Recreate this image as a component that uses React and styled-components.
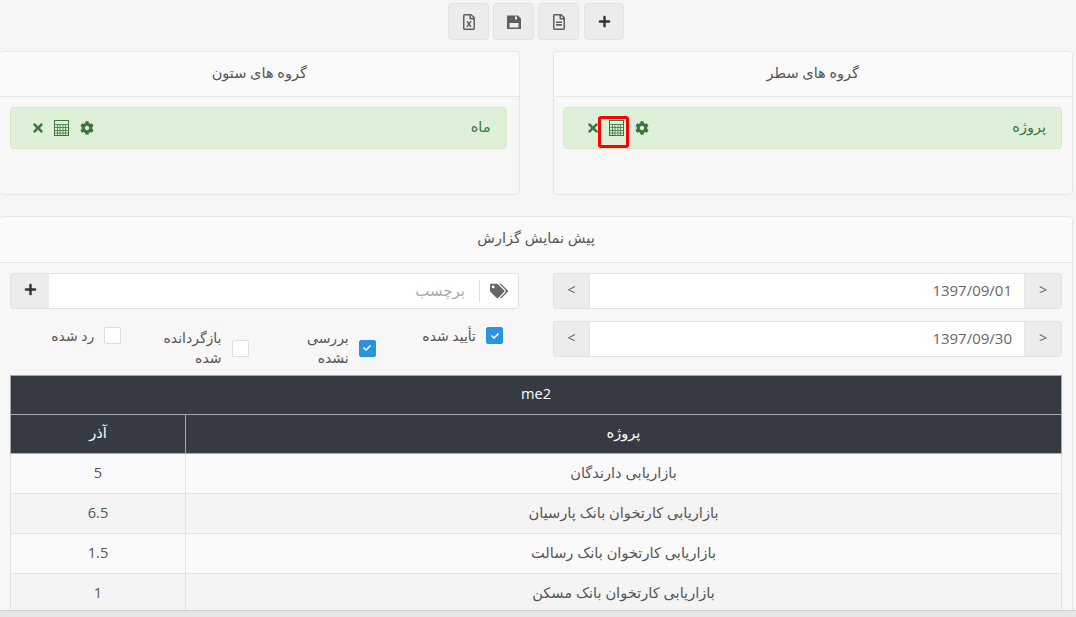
import React from "react";
import styled, { createGlobalStyle } from "styled-components";
import { FaCog, FaPlus, FaRegFileAlt, FaRegFileExcel, FaTags, FaTimes, FaCheck } from "react-icons/fa";

const GlobalStyle = createGlobalStyle`
  html, body {
    margin: 0;
    height: 100%;
    overflow: hidden;
    background: #f5f5f5;
  }
  body {
    font-family: "Open Sans", "DejaVu Sans", sans-serif;
    font-size: 15px;
    color: #555;
  }
  *, *::before, *::after { box-sizing: border-box; }
`;

const Page = styled.div`
  height: 617px;
  display: flex;
  flex-direction: column;
  overflow: hidden;
`;

const Content = styled.div`
  flex: 1;
  min-height: 0;
  overflow: hidden;
  margin-left: -1px;
  padding: 3px 3px 0 0;
`;

const HScrollbar = styled.div`
  flex: none;
  height: 7px;
  background: #e6e6e6;
  border-top: 1px solid #cfcfcf;
`;

const Toolbar = styled.div`
  display: flex;
  justify-content: center;
  gap: 4px;
  height: 37px;
`;

const ToolButton = styled.div`
  width: 41px;
  height: 37px;
  display: flex;
  align-items: center;
  justify-content: center;
  background: #ececec;
  border: 1px solid #e2e2e2;
  border-radius: 4px;
  color: #5f5f5f;
  font-size: 16px;
`;

const PlusButton = styled(ToolButton)`
  width: 40px;
  margin-left: 1px;
  color: #333;
  font-size: 13px;
`;

const Columns = styled.div`
  display: grid;
  grid-template-columns: 1fr 1fr;
  gap: 33px;
  margin-top: 11px;
`;

const Panel = styled.section`
  background: #f7f7f7;
  border: 1px solid #e6e6e6;
  border-radius: 4px;
`;

const PanelHead = styled.header`
  height: 45px;
  display: flex;
  align-items: center;
  justify-content: center;
  padding-bottom: 3px;
  background: #fafafa;
  border-bottom: 1px solid #e6e6e6;
  border-radius: 4px 4px 0 0;
  font-size: 14.5px;
  color: #555;
`;

const PreviewHead = styled(PanelHead)`
  height: 46px;
  padding-bottom: 4px;
`;

const GroupBody = styled.div`
  height: 97px;
  padding: 10px ${(p) => (p.$narrow ? "12px" : "10px")} 0 ${(p) => (p.$narrow ? "10px" : "9px")};
`;

const GroupRow = styled.div`
  height: 42px;
  display: flex;
  align-items: center;
  justify-content: space-between;
  padding: 0 15px 0 ${(p) => (p.$narrow ? "20px" : "22px")};
  background: #dff0d8;
  border: 1px solid #d6e9c6;
  border-radius: 4px;
  color: #3c763d;
  font-size: 14.5px;
`;

const GroupLabel = styled.span`
  padding-bottom: 4px;
`;

const GroupIcons = styled.div`
  display: flex;
  align-items: center;
  gap: 11px;
  color: #3c763d;
  font-size: 14px;
`;

const IconSlot = styled.span`
  position: relative;
  display: flex;
  ${(p) =>
    p.$marked &&
    `&::after {
      content: "";
      position: absolute;
      left: -11px;
      top: -4px;
      width: 31px;
      height: 32px;
      border: 3px solid #f00;
      border-radius: 3px;
    }`}
`;

const CloseSlot = styled(IconSlot)`
  margin-right: -2px;
`;

const Preview = styled(Panel)`
  margin-top: 21px;
  height: 420px;
`;

const PreviewBody = styled.div`
  padding: 10px;
`;

const FilterGrid = styled.div`
  display: grid;
  grid-template-columns: 1fr 1fr;
  column-gap: 34px;
`;

const InputGroup = styled.div`
  display: flex;
  height: 36px;
  border: 1px solid #e2e2e2;
  border-radius: 4px;
  background: #ececec;
  overflow: hidden;
  & + & {
    margin-top: 12px;
  }
`;

const Addon = styled.div`
  flex: none;
  width: ${(p) => p.$width || 36}px;
  display: flex;
  align-items: center;
  justify-content: center;
  padding-bottom: 4px;
  color: #666;
  font-size: 14px;
`;

const PlusAddon = styled(Addon)`
  padding-bottom: 3px;
  color: #333;
  font-size: 13px;
`;

const DateField = styled.div`
  flex: 1;
  display: flex;
  align-items: center;
  justify-content: flex-end;
  padding: 0 12px 3px 0;
  background: #fff;
  color: #666;
  font-size: 15px;
  border-left: 1px solid #e6e6e6;
  border-right: 1px solid #e6e6e6;
`;

const TagField = styled.div`
  flex: 1;
  display: flex;
  align-items: center;
  justify-content: flex-end;
  padding-right: 10px;
  background: #fff;
`;

const TagHint = styled.span`
  color: #a9a9a9;
  font-size: 15px;
  margin-right: 14px;
  padding-bottom: 3px;
`;

const TagIcon = styled.span`
  display: flex;
  align-items: center;
  height: 22px;
  padding-left: 10px;
  border-left: 1px solid #ddd;
  color: #666;
  font-size: 18px;
`;

const StatusRow = styled.div`
  display: grid;
  grid-template-columns: repeat(4, 1fr);
  margin-top: 12px;
  direction: rtl;
`;

const Status = styled.label`
  display: flex;
  align-items: center;
  align-self: start;
  gap: 10px;
  padding-right: 16px;
  height: ${(p) => (p.$wrapped ? 54 : 29)}px;
`;

const Box = styled.span`
  flex: none;
  width: 17px;
  height: 17px;
  display: flex;
  align-items: center;
  justify-content: center;
  border-radius: 2px;
  border: 1px solid ${(p) => (p.$checked ? "#2a93dd" : "#ddd")};
  background: ${(p) => (p.$checked ? "#2a93dd" : "#fff")};
  color: #fff;
  font-size: 8px;
`;

const StatusText = styled.span`
  width: 62px;
  font-size: 14px;
  line-height: 20px;
  color: #555;
`;

const ReportTable = styled.table`
  width: 100%;
  border-collapse: collapse;
  table-layout: fixed;
  direction: rtl;
  background: #f9f9f9;
  text-align: center;
  font-size: 14.6px;
  color: #555;
`;

const HeadCell = styled.th`
  height: 39px;
  padding: 0 0 5px;
  background: #363a42;
  border: 1px solid #a4a7ac;
  color: #fff;
  font-weight: 400;
  font-size: 14.6px;
`;

const Row = styled.tr`
  background: ${(p) => (p.$odd ? "#f4f4f4" : "#fafafa")};
`;

const Cell = styled.td`
  height: 40px;
  padding: 0 0 4px;
  border: 1px solid #e4e4e4;
`;

const SaveIcon = () => (
  <svg width="16" height="16" viewBox="0 0 16 16" fill="currentColor" fillRule="evenodd">
    <path d="M1 1.5h11l3 3v10.5H1zM3.5 9v4.5h9V9zM9 2.5v3h2v-3z" />
  </svg>
);

const CalcIcon = () => (
  <svg width="15" height="16" viewBox="0 0 15 16" fill="none" stroke="currentColor" strokeWidth="1">
    <rect x="0.5" y="0.5" width="14" height="15" />
    <path d="M0.5 4.5h14M0.5 7.5h14M0.5 10.5h14M0.5 13h14M3.5 4.5v11M6 4.5v11M9 4.5v11M11.5 4.5v11" strokeWidth="0.8" />
  </svg>
);

const GroupPanel = ({ title, label, marked, narrow }) => (
  <Panel>
    <PanelHead>{title}</PanelHead>
    <GroupBody $narrow={narrow}>
      <GroupRow $narrow={narrow}>
        <GroupIcons>
          <CloseSlot><FaTimes /></CloseSlot>
          <IconSlot $marked={marked}><CalcIcon /></IconSlot>
          <IconSlot><FaCog /></IconSlot>
        </GroupIcons>
        <GroupLabel>{label}</GroupLabel>
      </GroupRow>
    </GroupBody>
  </Panel>
);

const rows = [
  ["بازاریابی دارندگان", "5"],
  ["بازاریابی کارتخوان بانک پارسیان", "6.5"],
  ["بازاریابی کارتخوان بانک رسالت", "1.5"],
  ["بازاریابی کارتخوان بانک مسکن", "1"],
];

const statuses = [
  { text: "تأیید شده", checked: true },
  { text: "بررسی نشده", checked: true, wrapped: true },
  { text: "بازگردانده شده", wrapped: true },
  { text: "رد شده" },
];

export default function App() {
  return (
    <Page>
      <GlobalStyle />
      <Content>
        <Toolbar>
          <ToolButton><FaRegFileExcel /></ToolButton>
          <ToolButton><SaveIcon /></ToolButton>
          <ToolButton><FaRegFileAlt /></ToolButton>
          <PlusButton><FaPlus /></PlusButton>
        </Toolbar>

        <Columns>
          <GroupPanel title="گروه های ستون" label="ماه" narrow />
          <GroupPanel title="گروه های سطر" label="پروژه" marked />
        </Columns>

        <Preview>
          <PreviewHead>پیش نمایش گزارش</PreviewHead>
          <PreviewBody>
            <FilterGrid>
              <div>
                <InputGroup>
                  <PlusAddon $width={38}><FaPlus /></PlusAddon>
                  <TagField>
                    <TagHint>برچسب</TagHint>
                    <TagIcon><FaTags /></TagIcon>
                  </TagField>
                </InputGroup>
                <StatusRow>
                  {statuses.map((s) => (
                    <Status key={s.text} $wrapped={s.wrapped}>
                      <Box $checked={s.checked}>{s.checked && <FaCheck />}</Box>
                      <StatusText>{s.text}</StatusText>
                    </Status>
                  ))}
                </StatusRow>
              </div>
              <div>
                <InputGroup>
                  <Addon $width={35}>&lt;</Addon>
                  <DateField>1397/09/01</DateField>
                  <Addon>&gt;</Addon>
                </InputGroup>
                <InputGroup>
                  <Addon $width={35}>&lt;</Addon>
                  <DateField>1397/09/30</DateField>
                  <Addon>&gt;</Addon>
                </InputGroup>
              </div>
            </FilterGrid>

            <ReportTable>
              <colgroup>
                <col />
                <col style={{ width: 175 }} />
              </colgroup>
              <thead>
                <tr><HeadCell colSpan={2}>me2</HeadCell></tr>
                <tr>
                  <HeadCell>پروژه</HeadCell>
                  <HeadCell>آذر</HeadCell>
                </tr>
              </thead>
              <tbody>
                {rows.map(([name, value], i) => (
                  <Row key={name} $odd={i % 2 === 1}>
                    <Cell>{name}</Cell>
                    <Cell>{value}</Cell>
                  </Row>
                ))}
              </tbody>
            </ReportTable>
          </PreviewBody>
        </Preview>
      </Content>
      <HScrollbar />
    </Page>
  );
}
